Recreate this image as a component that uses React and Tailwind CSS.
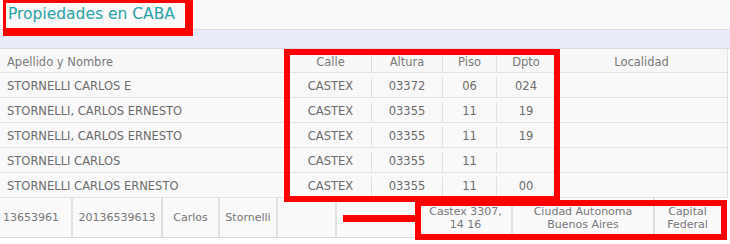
import React from 'react';

const rows = [
    { name: 'STORNELLI CARLOS E', calle: 'CASTEX', altura: '03372', piso: '06', dpto: '024' },
    { name: 'STORNELLI, CARLOS ERNESTO', calle: 'CASTEX', altura: '03355', piso: '11', dpto: '19' },
    { name: 'STORNELLI, CARLOS ERNESTO', calle: 'CASTEX', altura: '03355', piso: '11', dpto: '19' },
    { name: 'STORNELLI CARLOS', calle: 'CASTEX', altura: '03355', piso: '11', dpto: '' },
    { name: 'STORNELLI CARLOS ERNESTO', calle: 'CASTEX', altura: '03355', piso: '11', dpto: '00' },
];

function Row({ r, header }) {
    const txt = header ? 'text-[#7a7a7a] h-[24px]' : 'text-[#6c6c6c] h-[25px]';
    return (
        <div className={`flex items-center pt-[4px] border-b border-[#e2e2e2] ${header ? 'bg-[#f8f8f8]' : 'bg-[#f9f9f9]'} ${txt}`}>
            <div className="w-[290px] pl-[7px] border-r border-[#e0e0e0] h-full flex items-center">{r.name}</div>
            <div className="w-[82px] text-center border-r border-[#e0e0e0] h-full flex items-center justify-center">{r.calle}</div>
            <div className="w-[71px] text-center border-r border-[#e0e0e0] h-full flex items-center justify-center">{r.altura}</div>
            <div className="w-[54px] text-center border-r border-[#e0e0e0] h-full flex items-center justify-center">{r.piso}</div>
            <div className="w-[59px] text-center border-r border-[#e0e0e0] h-full flex items-center justify-center">{r.dpto}</div>
            <div className="flex-1 text-center h-full flex items-center justify-center">{r.localidad}</div>
        </div>
    );
}

export default function App() {
    return (
        <div className="relative w-[730px] h-[244px] overflow-hidden bg-white text-[11.5px] leading-none" style={{ fontFamily: '"DejaVu Sans", Verdana, sans-serif' }}>
            {/* title bar */}
            <div className="h-[30px] bg-[#f9f9f9] border-b border-[#dcdcdc] pl-[8px] pt-[7px]">
                <span className="text-[15.5px] text-[#27a2a8]">Propiedades en CABA</span>
            </div>
            <div className="h-[19px] bg-[#e9ecf8] border-b border-[#dadada]" />

            {/* tabla */}
            <div className="w-[728px] border-r border-[#e0e0e0]">
                <Row header r={{ name: 'Apellido y Nombre', calle: 'Calle', altura: 'Altura', piso: 'Piso', dpto: 'Dpto', localidad: 'Localidad' }} />
                {rows.map((r, i) => <Row key={i} r={r} />)}
            </div>

            {/* fila inferior */}
            <div className="flex h-[40px] w-[720px] bg-[#fafafa] border-b border-[#d8d8d8] text-[11px] text-[#777] text-center">
                <div className="w-[73px] border-r-2 border-[#e0e0e0] flex items-center pl-[3px]">13653961</div>
                <div className="w-[90px] border-r-2 border-[#e0e0e0] flex items-center justify-center">20136539613</div>
                <div className="w-[57px] border-r-2 border-[#e0e0e0] flex items-center justify-center">Carlos</div>
                <div className="w-[58px] border-r-2 border-[#e0e0e0] flex items-center justify-center">Stornelli</div>
                <div className="w-[59px] border-r-2 border-[#e0e0e0]" />
                <div className="w-[83px] border-r-2 border-[#e0e0e0]" />
                <div className="w-[93px] border-r-2 border-[#e0e0e0] flex items-center justify-center leading-[13px]">Castex 3307,<br />14 16</div>
                <div className="w-[142px] border-r-2 border-[#e0e0e0] flex items-center justify-center leading-[13px]">Ciudad Autonoma<br />Buenos Aires</div>
                <div className="flex-1 flex items-center justify-center leading-[13px]">Capital<br />Federal</div>
            </div>

            {/* marcas rojas */}
            <div className="absolute left-[3px] top-0 w-[190px] h-[36px] border-t-[3px] border-l-[3px] border-r-[8px] border-b-[8px] border-[#ff0000]" />
            <div className="absolute left-[284px] top-[49px] w-[276px] h-[153px] border-[6px] border-[#ff0000]" />
            <div className="absolute left-[343px] top-[215px] w-[75px] h-[7px] bg-[#ff0000]" />
            <div className="absolute left-[415px] top-[200px] w-[312px] h-[40px] border-[6px] border-[#ff0000]" />
        </div>
    );
}
